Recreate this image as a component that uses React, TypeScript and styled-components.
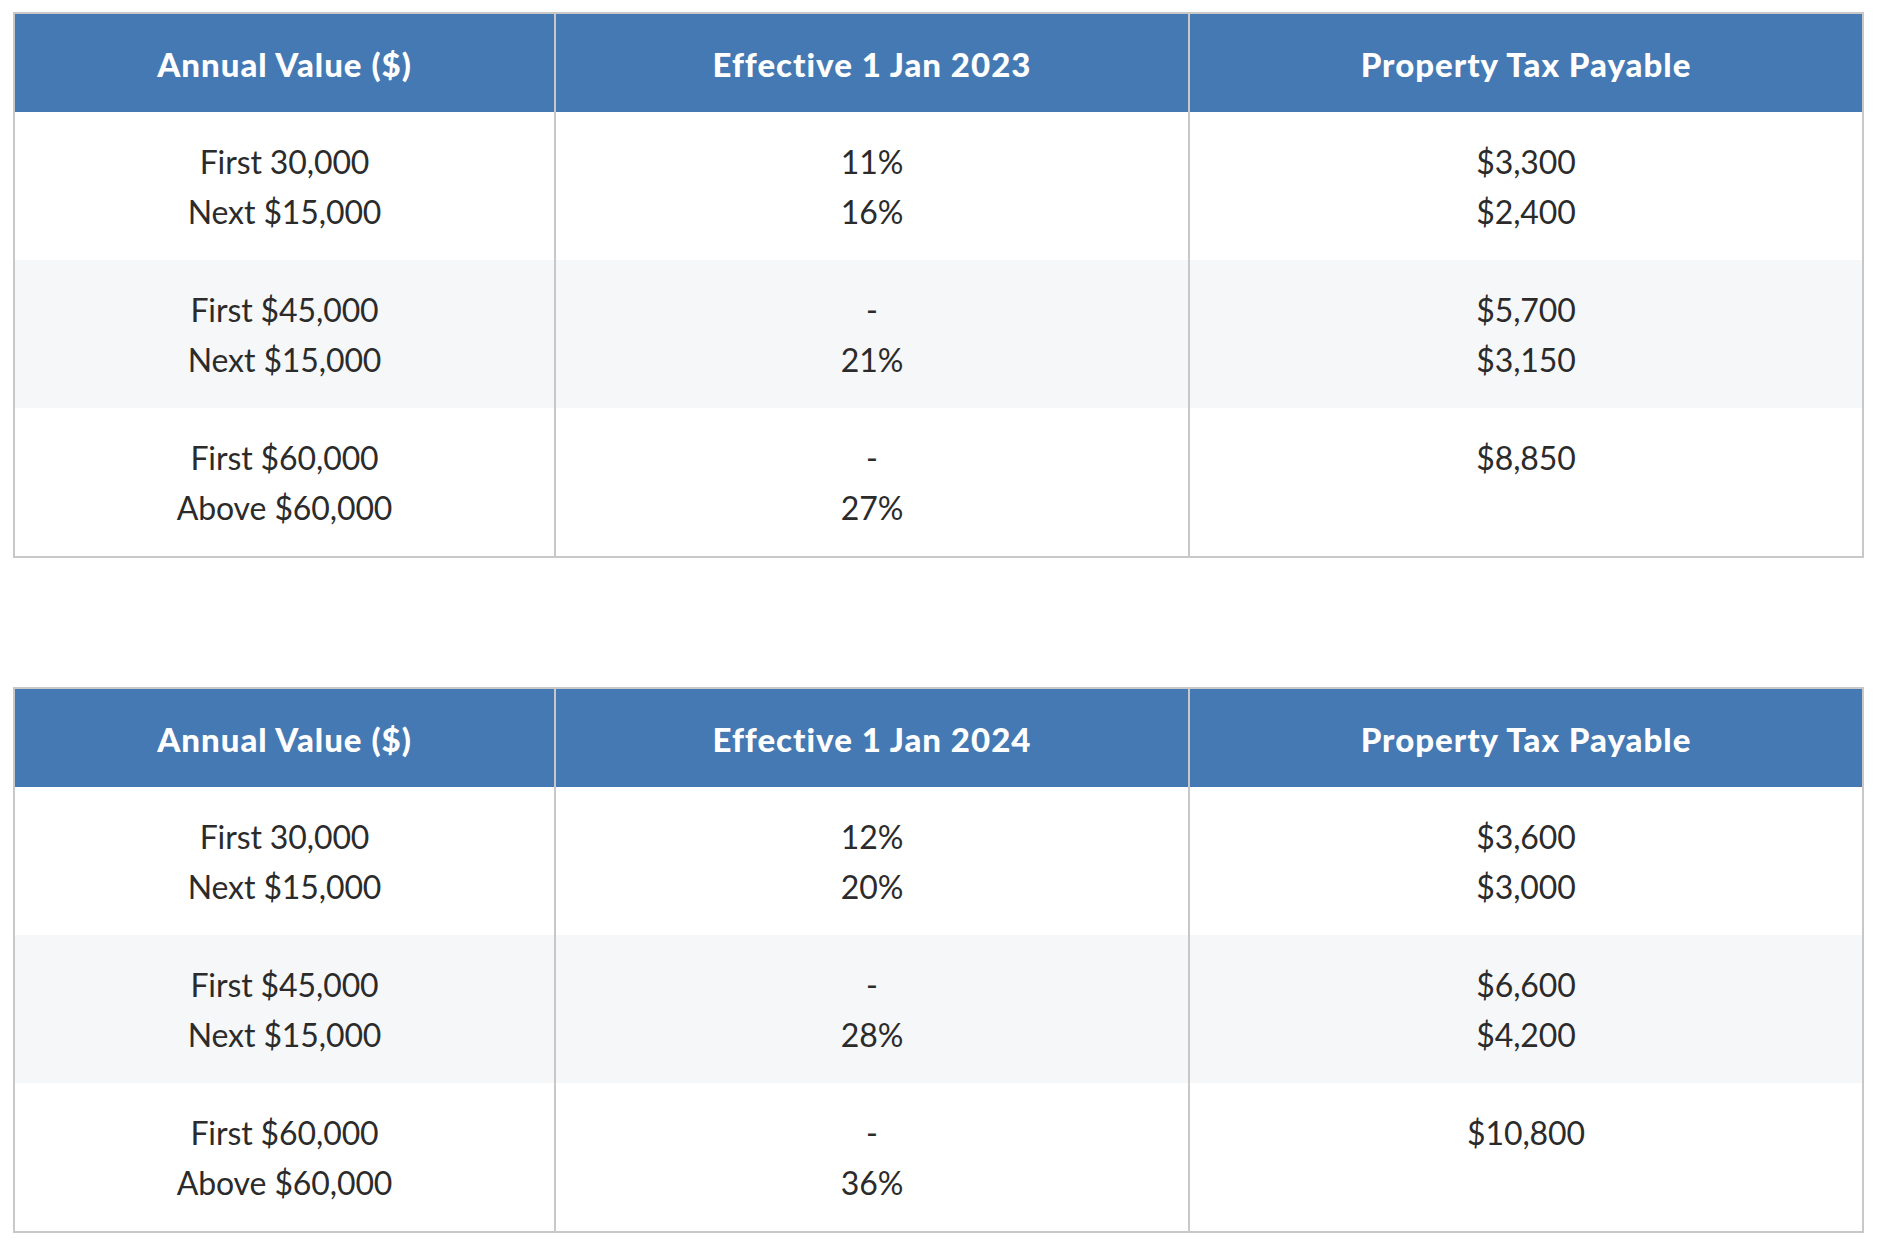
import styled, { createGlobalStyle } from "styled-components";

const GlobalStyle = createGlobalStyle`
  body {
    margin: 0;
    background: #ffffff;
    font-family: Lato, "Liberation Sans", sans-serif;
  }
  * {
    box-sizing: border-box;
  }
`;

const Page = styled.div`
  display: flex;
  flex-direction: column;
  gap: 129px;
  padding: 12px 16px 18px 13px;
`;

const Table = styled.div`
  width: 1851px;
  border: 2px solid #c8c8c8;
`;

const Row = styled.div<{ $striped?: boolean }>`
  display: grid;
  grid-template-columns: 539px 634px 674px;
  background: ${(p) => (p.$striped ? "#f6f7f9" : "#ffffff")};
`;

const HeadRow = styled(Row)`
  background: #4579b3;
  height: 98px;
`;

const HeadCell = styled.div`
  display: flex;
  align-items: center;
  justify-content: center;
  padding-top: 2px;
  color: #ffffff;
  font-weight: 900;
  font-size: 33px;
  letter-spacing: 1px;
  & + & {
    border-left: 2px solid #c8c8c8;
  }
`;

const Cell = styled.div`
  display: flex;
  flex-direction: column;
  align-items: center;
  height: 148px;
  padding: 25px 0 23px;
  color: #2b2b2b;
  font-size: 32px;
  line-height: 50px;
  letter-spacing: -0.1px;
  & + & {
    border-left: 2px solid #c8c8c8;
  }
`;

type Band = {
  values: string[];
  rates: string[];
  tax: string[];
};

type TaxTable = {
  effective: string;
  bands: Band[];
};

const tables: TaxTable[] = [
  {
    effective: "Effective 1 Jan 2023",
    bands: [
      { values: ["First 30,000", "Next $15,000"], rates: ["11%", "16%"], tax: ["$3,300", "$2,400"] },
      { values: ["First $45,000", "Next $15,000"], rates: ["-", "21%"], tax: ["$5,700", "$3,150"] },
      { values: ["First $60,000", "Above $60,000"], rates: ["-", "27%"], tax: ["$8,850"] },
    ],
  },
  {
    effective: "Effective 1 Jan 2024",
    bands: [
      { values: ["First 30,000", "Next $15,000"], rates: ["12%", "20%"], tax: ["$3,600", "$3,000"] },
      { values: ["First $45,000", "Next $15,000"], rates: ["-", "28%"], tax: ["$6,600", "$4,200"] },
      { values: ["First $60,000", "Above $60,000"], rates: ["-", "36%"], tax: ["$10,800"] },
    ],
  },
];

const Lines = ({ items }: { items: string[] }) => (
  <Cell>
    {items.map((t, i) => (
      <span key={i}>{t}</span>
    ))}
  </Cell>
);

const RateTable = ({ data }: { data: TaxTable }) => (
  <Table>
    <HeadRow>
      <HeadCell>Annual Value ($)</HeadCell>
      <HeadCell>{data.effective}</HeadCell>
      <HeadCell>Property Tax Payable</HeadCell>
    </HeadRow>
    {data.bands.map((b, i) => (
      <Row key={i} $striped={i % 2 === 1}>
        <Lines items={b.values} />
        <Lines items={b.rates} />
        <Lines items={b.tax} />
      </Row>
    ))}
  </Table>
);

const App = () => {
  return (
    <>
      <GlobalStyle />
      <Page>
        {tables.map((t) => (
          <RateTable key={t.effective} data={t} />
        ))}
      </Page>
    </>
  );
};

export default App;
